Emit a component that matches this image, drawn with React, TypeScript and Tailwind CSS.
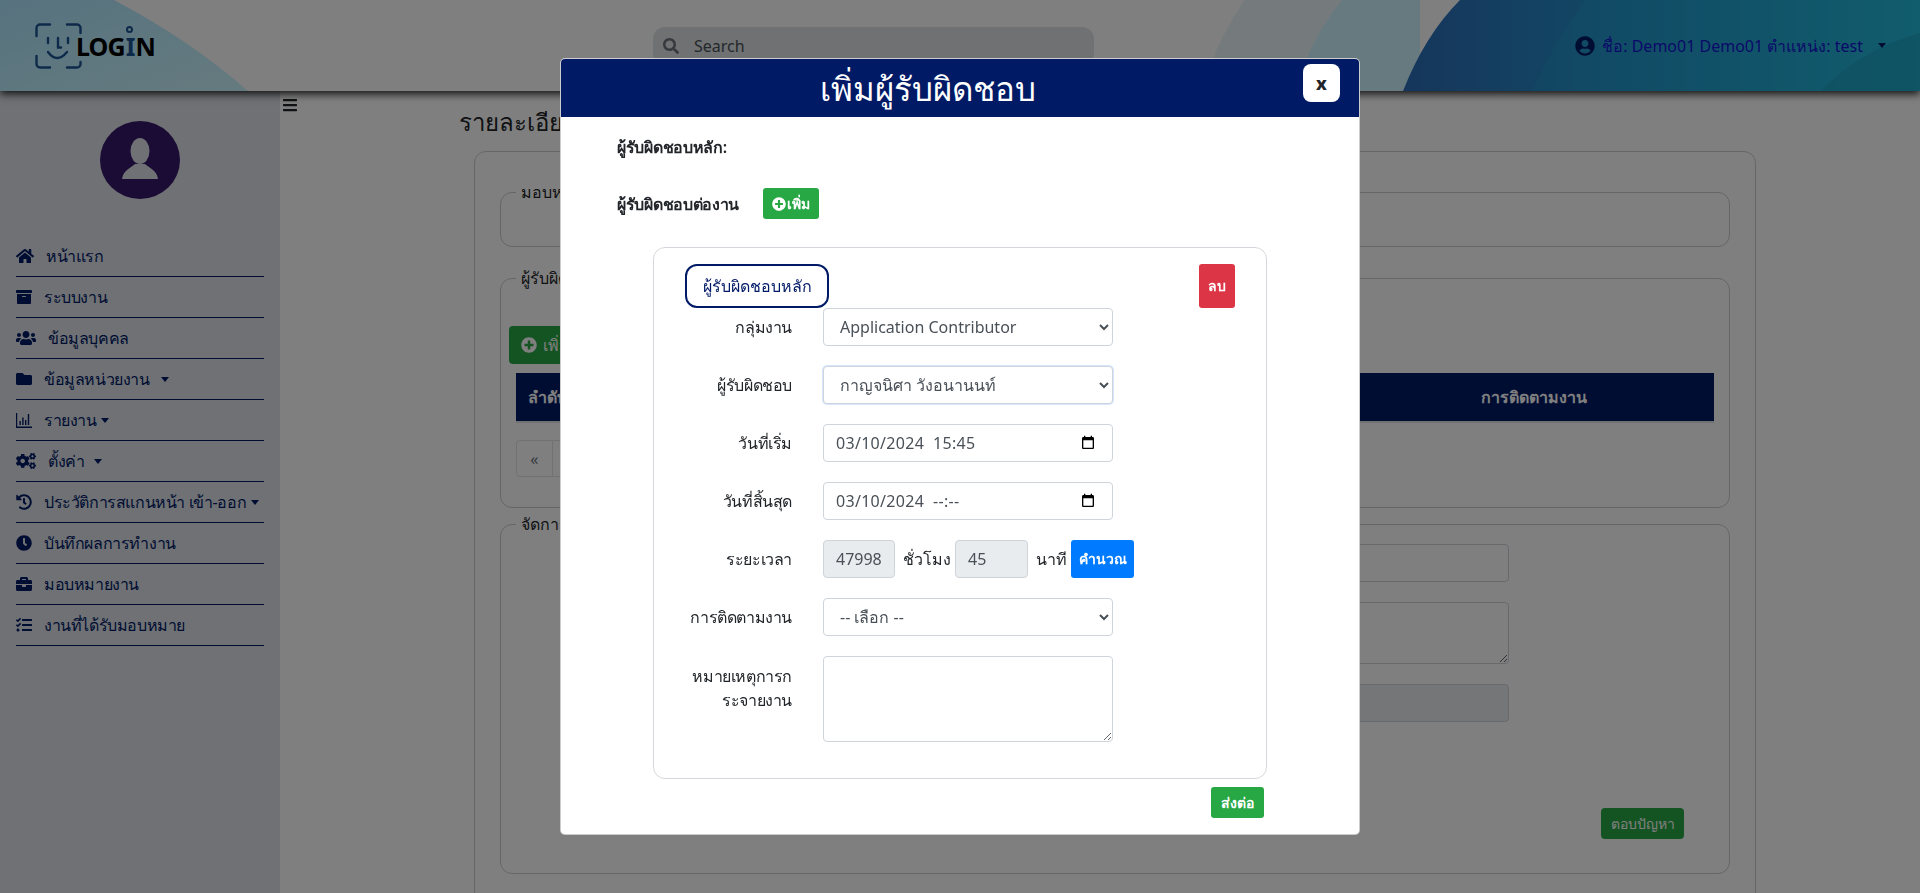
import {
  FaHome, FaArchive, FaUsers, FaFolder, FaCogs, FaHistory, FaClock, FaBriefcase, FaTasks,
  FaPlusCircle, FaUserCircle, FaSearch, FaBars,
} from "react-icons/fa";
import type { ReactNode } from "react";

const FONT = "font-['Noto_Sans','Noto_Sans_CJK_SC',sans-serif]";

function Caret({ className = "" }: { className?: string }) {
  return (
    <span
      className={`inline-block h-0 w-0 shrink-0 border-x-[4px] border-t-[5px] border-x-transparent border-t-current ${className}`}
    />
  );
}

function ChartIcon() {
  return (
    <svg className="h-4 w-4 shrink-0" viewBox="0 0 16 16" fill="currentColor">
      <path d="M0 1h1.2v13.4H16V16H0Z" />
      <path d="M3.4 9h1.4v4H3.4ZM6.2 5.5h1.4V13H6.2ZM9 8h1.4v5H9ZM11.8 2h1.4v11h-1.4Z" />
    </svg>
  );
}

type NavItem = { icon: ReactNode; text: string; caret?: string };

const nav: NavItem[] = [
  { icon: <FaHome className="h-4 w-[18px] shrink-0" />, text: "หน้าแรก" },
  { icon: <FaArchive className="h-4 w-4 shrink-0" />, text: "ระบบงาน" },
  { icon: <FaUsers className="h-4 w-5 shrink-0" />, text: "ข้อมูลบุคคล" },
  { icon: <FaFolder className="h-4 w-4 shrink-0" />, text: "ข้อมูลหน่วยงาน", caret: "ml-[11px]" },
  { icon: <ChartIcon />, text: "รายงาน", caret: "ml-[4px]" },
  { icon: <FaCogs className="h-4 w-5 shrink-0" />, text: "ตั้งค่า", caret: "ml-[10px]" },
  { icon: <FaHistory className="h-4 w-4 shrink-0" />, text: "ประวัติการสแกนหน้า เข้า-ออก", caret: "ml-[5px]" },
  { icon: <FaClock className="h-4 w-4 shrink-0" />, text: "บันทึกผลการทำงาน" },
  { icon: <FaBriefcase className="h-4 w-4 shrink-0" />, text: "มอบหมายงาน" },
  { icon: <FaTasks className="h-4 w-4 shrink-0" />, text: "งานที่ได้รับมอบหมาย" },
];

function HeaderArt() {
  return (
    <svg className="absolute inset-0 h-[91px] w-[1920px]" viewBox="0 0 1920 91" preserveAspectRatio="none">
      <defs>
        <linearGradient id="blob" x1="0" y1="0" x2="1" y2="1">
          <stop offset="0" stopColor="#aee6ff" />
          <stop offset="1" stopColor="#ccf6ff" />
        </linearGradient>
        <linearGradient id="deep" x1="0" y1="0" x2="1" y2="0">
          <stop offset="0" stopColor="#2c6cb8" />
          <stop offset="0.45" stopColor="#2496cc" />
          <stop offset="1" stopColor="#24c0de" />
        </linearGradient>
      </defs>
      <path d="M0 0H114Q190 40 248 91H0Z" fill="url(#blob)" />
      <path d="M1244 0Q1215 45 1200 91H1420V0Z" fill="#eaf6fb" />
      <path d="M1342 0Q1310 40 1295 91H1420V0Z" fill="#ccf4ff" />
      <path d="M1460 0Q1425 35 1403 91H1920V0Z" fill="url(#deep)" />
      <path d="M1586 0Q1555 40 1532 91H1920V0Z" fill="#1ea8d0" fillOpacity="0.25" />
      <path d="M1821 91Q1860 50 1920 33V91Z" fill="#1c9cc0" fillOpacity="0.55" />
    </svg>
  );
}

function Logo() {
  return (
    <div className="flex w-[653px] shrink-0 items-center pl-[35px]">
      <svg className="h-[46px] w-[47px] shrink-0" viewBox="0 0 47 46" fill="none" stroke="#1c5594" strokeWidth="2.4" strokeLinecap="round">
        <path d="M1.5 13V5A3.5 3.5 0 0 1 5 1.5H15" />
        <path d="M32 1.5H42A3.5 3.5 0 0 1 45.5 5V10" />
        <path d="M1.5 33V41A3.5 3.5 0 0 0 5 44.5H15" />
        <path d="M32 44.5H42A3.5 3.5 0 0 0 45.5 41V39" />
        <path d="M13 15V20M33 15V20M23 15V24.5H26" />
        <path d="M13 29Q22 41 32 29" />
      </svg>
      <span className="relative z-[1] -ml-[6px] mt-[2px] flex text-[25px] font-bold leading-none tracking-[-0.9px] text-black">
        <span>LOG</span>
        <span className="relative mx-[1px] text-[#1c5594]">
          I
          <span className="absolute -top-[8px] left-[0px] h-[7px] w-[7px] rounded-full border-2 border-[#1c5594]" />
        </span>
        <span>N</span>
      </span>
    </div>
  );
}

function Sidebar() {
  return (
    <aside className="w-[280px] shrink-0 bg-[#dee2e8] px-4 pt-[30px]">
      <div className="flex justify-center">
        <svg className="h-[78px] w-[80px]" viewBox="0 0 80 78">
          <ellipse cx="40" cy="39" rx="40" ry="39" fill="#35196a" />
          <ellipse cx="40" cy="30" rx="9.5" ry="13" fill="#dee2e8" />
          <path d="M22 58C23 50 30 47 35 43H45C50 47 57 50 58 58Z" fill="#dee2e8" />
        </svg>
      </div>
      <nav className="mt-[37px] flex flex-col text-[#001a66]">
        {nav.map((n) => (
          <div key={n.text} className="flex h-[41px] items-center border-b border-[#001a66]">
            {n.icon}
            <span className="ml-[12px] whitespace-nowrap text-base tracking-[-0.4px]">{n.text}</span>
            {n.caret && <Caret className={n.caret} />}
          </div>
        ))}
      </nav>
    </aside>
  );
}

function Panel({ legend, className, children }: { legend: string; className: string; children?: ReactNode }) {
  return (
    <div className={`relative rounded-xl border border-[#cccccc] ${className}`}>
      <span className="absolute -top-[13px] left-[15px] bg-white px-[5px] text-base font-medium leading-6 text-[#212529]">
        {legend}
      </span>
      {children}
    </div>
  );
}

function Main() {
  return (
    <main className="flex min-w-0 flex-1 bg-white">
      <div className="w-[17px] shrink-0 pl-[3px] pt-[5px] text-[#212529]">
        <FaBars className="h-[18px] w-[14px]" />
      </div>
      <div className="ml-[177px] w-[1282px] shrink-0 pt-[13px]">
        <h1 className="-ml-[15px] text-2xl font-normal leading-9 text-[#212529]">รายละเอียดงาน</h1>
        <div className="mt-[11px] h-[800px] rounded-xl border border-[#cccccc] px-[25px] pt-[40px]">
          <Panel legend="มอบหมายงาน" className="h-[55px]" />
          <Panel legend="ผู้รับผิดชอบ" className="mt-[31px] h-[230px] px-[8px] pt-[47px]">
            <button className="flex h-[38px] w-[120px] items-center gap-[6px] rounded bg-[#28a745] px-3 text-base text-white">
              <FaPlusCircle className="h-4 w-4" /> เพิ่ม
            </button>
            <div className="mx-[7px] mt-[9px] flex h-[50px] items-center justify-between border-b-2 border-[#dee2e6] bg-[#001a66] font-semibold text-white">
              <span className="px-3">ลำดับ</span>
              <span className="w-[360px] text-center">การติดตามงาน</span>
            </div>
            <div className="mx-[7px] mt-[17px] flex h-[37px] w-[72px] text-[#6c757d]">
              <span className="flex w-[37px] items-center justify-center rounded-l border border-[#dee2e6]">«</span>
              <span className="flex w-[36px] items-center justify-center border border-l-0 border-[#dee2e6]">1</span>
            </div>
          </Panel>
          <Panel legend="จัดการปัญหา" className="mt-[16px] h-[350px] pt-[19px]">
            <div className="ml-[520px] mr-[220px] flex flex-col">
              <div className="h-[38px] rounded border border-[#ced4da]" />
              <textarea className="mt-5 h-[62px] w-full rounded border border-[#ced4da] bg-transparent" />
              <div className="mt-5 h-[38px] rounded border border-[#ced4da] bg-[#e9ecef]" />
            </div>
            <div className="mr-[45px] mt-[86px] flex justify-end">
              <button className="h-[31px] w-[83px] rounded bg-[#28a745] text-sm text-white">ตอบปัญหา</button>
            </div>
          </Panel>
        </div>
      </div>
    </main>
  );
}

const control = "h-[38px] rounded border border-[#ced4da] text-base text-[#495057]";

function Row({ label, children, top }: { label: ReactNode; children: ReactNode; top?: boolean }) {
  return (
    <div className={`flex ${top ? "items-start" : "items-center"}`}>
      <label className={`w-[138px] shrink-0 text-right text-base leading-6 tracking-[-0.4px] text-[#212529] ${top ? "pt-[8px]" : ""}`}>
        {label}
      </label>
      <div className="ml-[31px] flex items-center">{children}</div>
    </div>
  );
}

function DateField({ value }: { value: string }) {
  return (
    <div className={`${control} flex w-[290px] items-center justify-between bg-white pl-3 pr-[16px]`}>
      <input readOnly value={value} className="w-[220px] bg-transparent tracking-[0.3px] outline-none" />
      <svg className="h-[16px] w-[16px]" viewBox="0 0 24 24" fill="#000">
        <path d="M19 3h-1V1h-2v2H8V1H6v2H5c-1.11 0-1.99.9-1.99 2L3 19c0 1.1.89 2 2 2h14c1.1 0 2-.9 2-2V5c0-1.1-.9-2-2-2zm0 16H5V8h14v11z" />
      </svg>
    </div>
  );
}

function Modal() {
  return (
    <div className="fixed inset-0 z-20 flex items-start justify-center bg-black/50 pt-[58px]">
      <div className="w-[800px] overflow-hidden rounded-[5px] border border-black/20 bg-white">
        <div className="relative flex h-[58px] items-center bg-[#001a66] pr-[64px]">
          <h2 className="flex-1 text-center text-[33px] font-normal leading-none text-white">เพิ่มผู้รับผิดชอบ</h2>
          <button className="absolute right-[19px] top-[5px] flex h-[38px] w-[37px] items-center justify-center rounded-lg bg-white text-lg font-extrabold text-[#212529]">
            x
          </button>
        </div>
        <div className="flex flex-col pb-[16px] pl-[56px] pr-[95px] pt-[18px]">
          <div className="text-base font-semibold leading-6 tracking-[-0.3px] text-[#212529]">ผู้รับผิดชอบหลัก:</div>
          <div className="mt-[29px] flex items-center">
            <span className="w-[146px] text-base font-semibold leading-6 tracking-[-0.3px] text-[#212529]">ผู้รับผิดชอบต่องาน</span>
            <button className="flex h-[31px] w-[56px] items-center justify-center gap-[1px] rounded-[3px] bg-[#28a745] text-sm font-semibold text-white">
              <FaPlusCircle className="h-[14px] w-[14px]" />
              เพิ่ม
            </button>
          </div>
          <div className="ml-[36px] mt-[28px] w-[614px] rounded-xl border border-[#d4d8dc] pb-[36px] pt-[16px]">
            <div className="flex items-start justify-between pl-[31px] pr-[31px]">
              <span className="flex h-[44px] w-[144px] items-center justify-center rounded-xl border-2 border-[#001a66] text-base text-[#001a66]">
                ผู้รับผิดชอบหลัก
              </span>
              <button className="h-[44px] w-[36px] rounded-[3px] bg-[#dc3545] text-sm font-semibold text-white">ลบ</button>
            </div>
            <div className="flex flex-col gap-5">
              <Row label="กลุ่มงาน">
                <select defaultValue="a" className={`${control} w-[290px] bg-white px-3`}>
                  <option value="a">Application Contributor</option>
                </select>
              </Row>
              <Row label="ผู้รับผิดชอบ">
                <select defaultValue="a" className={`${control} w-[290px] border-[#80bdff] bg-white px-3 shadow-[0_0_0_1px_rgba(128,189,255,0.35)]`}>
                  <option value="a">กาญจนิศา วังอนานนท์</option>
                </select>
              </Row>
              <Row label="วันที่เริ่ม">
                <DateField value="03/10/2024  15:45" />
              </Row>
              <Row label="วันที่สิ้นสุด">
                <DateField value="03/10/2024  --:--" />
              </Row>
              <Row label="ระยะเวลา">
                <input readOnly value="47998" className={`${control} w-[72px] bg-[#e9ecef] px-3`} />
                <span className="ml-2 w-[44px] whitespace-nowrap text-base text-[#212529]">ชั่วโมง</span>
                <input readOnly value="45" className={`${control} ml-2 w-[73px] bg-[#e9ecef] px-3`} />
                <span className="ml-2 w-[27px] whitespace-nowrap text-base text-[#212529]">นาที</span>
                <button className="ml-2 h-[38px] w-[63px] rounded-[3px] bg-[#007bff] text-sm font-semibold text-white">คำนวณ</button>
              </Row>
              <Row label="การติดตามงาน">
                <select defaultValue="a" className={`${control} w-[290px] bg-white px-3`}>
                  <option value="a">-- เลือก --</option>
                </select>
              </Row>
              <Row top label={<>หมายเหตุการก<br />ระจายงาน</>}>
                <textarea className="h-[86px] w-[290px] rounded border border-[#ced4da] bg-white" />
              </Row>
            </div>
          </div>
          <div className="mt-[8px] flex justify-end">
            <button className="h-[31px] w-[53px] rounded-[3px] bg-[#28a745] text-sm font-semibold text-white">ส่งต่อ</button>
          </div>
        </div>
      </div>
    </div>
  );
}

export default function App() {
  return (
    <div className={`${FONT} flex h-screen flex-col overflow-hidden bg-white`}>
      <header className="relative z-10 flex h-[91px] shrink-0 items-center shadow-[0_3px_8px_rgba(0,0,0,0.85)]">
        <HeaderArt />
        <div className="relative flex w-full items-center">
          <Logo />
          <div className="flex h-[38px] w-[441px] shrink-0 items-center rounded-xl bg-[#dee2e6] pl-[10px] text-[#6c757d]">
            <FaSearch className="h-4 w-4" />
            <span className="ml-[15px] text-base text-[#495057]">Search</span>
          </div>
          <div className="ml-auto flex items-center pr-[34px] text-[#001a66]">
            <FaUserCircle className="h-5 w-5" />
            <span className="ml-[7px] whitespace-nowrap text-base text-[#1414d0]">ชื่อ: Demo01 Demo01 ตำแหน่ง: test</span>
            <Caret className="ml-[15px]" />
          </div>
        </div>
      </header>
      <div className="flex min-h-0 flex-1">
        <Sidebar />
        <Main />
      </div>
      <Modal />
    </div>
  );
}
